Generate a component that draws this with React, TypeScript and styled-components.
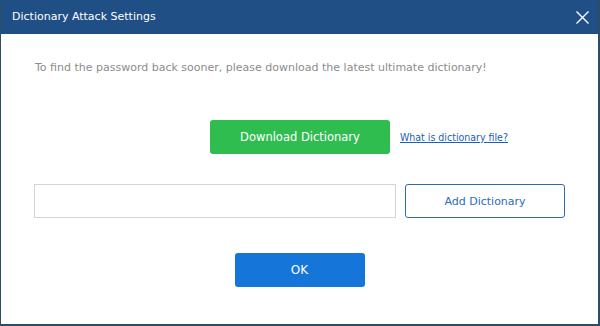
import React from "react";
import styled, { createGlobalStyle } from "styled-components";

const Global = createGlobalStyle`
  html, body { margin: 0; padding: 0; background: #ffffff; }
  body { font-family: Tahoma, "DejaVu Sans", Verdana, sans-serif; }
  * { box-sizing: border-box; }
`;

const Window = styled.div`
  width: 600px;
  height: 326px;
  display: flex;
  flex-direction: column;
  background: #ffffff;
  border-left: 1px solid #2b4d68;
  border-right: 2px solid #2b4d68;
  border-bottom: 2px solid #2b4d68;
  overflow: hidden;
`;

const TitleBar = styled.div`
  height: 34px;
  flex: 0 0 34px;
  background: #1f4f85;
  display: flex;
  align-items: center;
  justify-content: space-between;
  padding: 0 8px 0 12px;
  margin-left: -1px;
  margin-right: -2px;
`;

const Title = styled.span`
  color: #ffffff;
  font-family: "DejaVu Sans", Verdana, sans-serif;
  font-size: 11px;
  padding-bottom: 2px;
`;

const CloseButton = styled.button`
  width: 20px;
  height: 20px;
  border: none;
  background: transparent;
  padding: 0;
  display: flex;
  align-items: center;
  justify-content: center;
  cursor: pointer;
`;

const Body = styled.div`
  flex: 1;
  display: flex;
  flex-direction: column;
  padding: 25px 0 0 33px;
`;

const Hint = styled.p`
  margin: 0 0 0 1px;
  color: #8c8c8c;
  font-family: "DejaVu Sans", Verdana, sans-serif;
  font-size: 11px;
  line-height: 18px;
`;

const DownloadRow = styled.div`
  display: flex;
  align-items: center;
  gap: 10px;
  margin: 43px 0 0 176px;
`;

const Button = styled.button<{ $variant: "green" | "blue" | "outline" }>`
  height: 34px;
  border-radius: 3px;
  font-family: "DejaVu Sans", Verdana, sans-serif;
  font-size: 11px;
  cursor: pointer;
  display: flex;
  align-items: center;
  justify-content: center;
  padding: 0;
  background: ${(p) =>
    p.$variant === "green" ? "#2fbd4f" : p.$variant === "blue" ? "#1675d8" : "#ffffff"};
  color: ${(p) => (p.$variant === "outline" ? "#2c6cb8" : "#ffffff")};
  border: ${(p) => (p.$variant === "outline" ? "1px solid #2f6aad" : "none")};
`;

const DownloadButton = styled(Button)`
  width: 180px;
  font-size: 11.5px;
`;

const HelpLink = styled.a`
  color: #1a5fb8;
  font-family: "DejaVu Sans Condensed", "DejaVu Sans", sans-serif;
  font-size: 10.5px;
  text-decoration: underline;
  cursor: pointer;
`;

const AddRow = styled.div`
  display: flex;
  align-items: center;
  gap: 9px;
  margin-top: 30px;
`;

const PathInput = styled.input`
  width: 362px;
  height: 34px;
  border: 1px solid #d4d4d4;
  background: #ffffff;
  padding: 0 8px;
  outline: none;
`;

const AddButton = styled(Button)`
  width: 160px;
  height: 34px;
`;

const Footer = styled.div`
  display: flex;
  justify-content: center;
  margin: 35px 0 0 -33px;
`;

const OkButton = styled(Button)`
  width: 130px;
  font-size: 12px;
`;

export default function App() {
  return (
    <>
      <Global />
      <Window>
        <TitleBar>
          <Title>Dictionary Attack Settings</Title>
          <CloseButton aria-label="Close">
            <svg width="13" height="13" viewBox="0 0 13 13">
              <path d="M0.5 0.5 L12.5 12.5 M12.5 0.5 L0.5 12.5" stroke="#ffffff" strokeWidth="1.4" fill="none" />
            </svg>
          </CloseButton>
        </TitleBar>
        <Body>
          <Hint>To find the password back sooner, please download the latest ultimate dictionary!</Hint>
          <DownloadRow>
            <DownloadButton $variant="green">Download Dictionary</DownloadButton>
            <HelpLink>What is dictionary file?</HelpLink>
          </DownloadRow>
          <AddRow>
            <PathInput />
            <AddButton $variant="outline">Add Dictionary</AddButton>
          </AddRow>
          <Footer>
            <OkButton $variant="blue">OK</OkButton>
          </Footer>
        </Body>
      </Window>
    </>
  );
}
